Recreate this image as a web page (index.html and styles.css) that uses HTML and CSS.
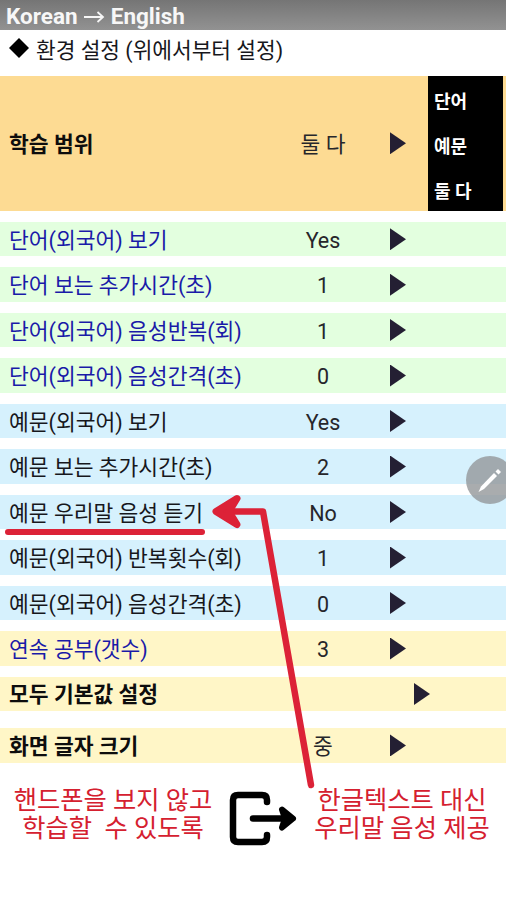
FILE: index.html
```
<!DOCTYPE html>
<html lang="ko">
<head>
  <meta charset="UTF-8">
  <meta name="viewport" content="width=device-width, initial-scale=1.0">
  <title>Korean → English</title>
  <link rel="stylesheet" href="styles.css">
</head>
<body>
  <div class="screen">
    <header class="title-bar">Korean <svg class="title-arrow" viewBox="0 0 22 14"><path d="M1 7H20M14.5 2L20 7L14.5 12"/></svg> English</header>
    <h1 class="page-title"><svg class="diamond" viewBox="0 0 20 20"><path d="M10 0L20 10L10 20L0 10Z"/></svg>환경 설정 (위에서부터 설정)</h1>

    <!-- Study range, with its options open -->
    <div class="row range">
      <span class="label bold">학습 범위</span>
      <span class="value">둘 다</span>
      <span class="arrow"></span>
      <ul class="options">
        <li>단어</li>
        <li>예문</li>
        <li>둘 다</li>
      </ul>
    </div>

    <!-- Settings -->
    <div class="settings">
      <div class="row green"><span class="label blue-text">단어(외국어) 보기</span><span class="value">Yes</span><span class="arrow"></span></div>
      <div class="row green"><span class="label blue-text">단어 보는 추가시간(초)</span><span class="value">1</span><span class="arrow"></span></div>
      <div class="row green"><span class="label blue-text">단어(외국어) 음성반복(회)</span><span class="value">1</span><span class="arrow"></span></div>
      <div class="row green"><span class="label blue-text">단어(외국어) 음성간격(초)</span><span class="value">0</span><span class="arrow"></span></div>
      <div class="row sky"><span class="label">예문(외국어) 보기</span><span class="value">Yes</span><span class="arrow"></span></div>
      <div class="row sky"><span class="label">예문 보는 추가시간(초)</span><span class="value">2</span><span class="arrow"></span></div>
      <div class="row sky"><span class="label">예문 우리말 음성 듣기</span><span class="value">No</span><span class="arrow"></span></div>
      <div class="row sky"><span class="label">예문(외국어) 반복횟수(회)</span><span class="value">1</span><span class="arrow"></span></div>
      <div class="row sky"><span class="label">예문(외국어) 음성간격(초)</span><span class="value">0</span><span class="arrow"></span></div>
      <div class="row yellow"><span class="label blue-text">연속 공부(갯수)</span><span class="value">3</span><span class="arrow"></span></div>
      <div class="row yellow reset"><span class="label bold">모두 기본값 설정</span><span class="value"></span><span class="arrow"></span></div>
      <div class="row yellow font-size"><span class="label bold">화면 글자 크기</span><span class="value">중</span><span class="arrow"></span></div>
    </div>

    <!-- Captions -->
    <div class="captions">
      <p class="caption left">핸드폰을 보지 않고<br>학습할&nbsp; 수 있도록</p>
      <svg class="exit-icon" viewBox="0 0 68 56">
        <path d="M38 11V9Q38 4 33 4H9Q4 4 4 9V46Q4 51 9 51H33Q38 51 38 46V44"/>
        <path d="M24 27.5H58"/>
        <path d="M53 18.5L64 27.5L53 36.5L56 27.5Z"/>
      </svg>
      <p class="caption right">한글텍스트 대신<br>우리말 음성 제공</p>
    </div>

    <!-- Red underline and pointer -->
    <svg class="pointer" viewBox="0 0 506 900">
      <path class="underline" d="M8 532H202"/>
      <path class="line" d="M222 511.5H263L311 785"/>
      <path class="head" d="M237 498.5L216 511.5L237 524.5L229 511.5Z"/>
    </svg>

    <button class="edit-button" aria-label="Edit">
      <svg viewBox="0 0 48 48">
        <path d="M12.5 36L15 30.5L28 17L31 20L18 33Z"/>
        <path d="M29.5 15.5L32 13L35 16L32.5 18.5Z"/>
      </svg>
    </button>
  </div>
</body>
</html>
```
FILE: styles.css
```
body {
  margin: 0;
  background-color: #ffffff;
  font-family: Roboto, "Noto Sans CJK KR", sans-serif;
  color: #17171c;
}
.screen {
  position: relative;
  width: 506px;
  height: 900px;
  overflow: hidden;
}
.title-bar {
  box-sizing: border-box;
  height: 30px;
  padding: 2px 6px 0;
  background: linear-gradient(#757575, #929292);
  color: #f7f7f7;
  font-size: 22.5px;
  font-weight: 700;
  line-height: 28px;
  white-space: nowrap;
}
.title-arrow {
  width: 22px;
  height: 14px;
  fill: none;
  stroke: #f7f7f7;
  stroke-width: 1.8;
}
.page-title {
  display: flex;
  align-items: center;
  height: 36px;
  margin: 0 0 10px;
  padding-left: 9px;
  font-size: 21.4px;
  font-weight: 400;
  white-space: nowrap;
}
.diamond {
  width: 20px;
  height: 20px;
  margin-right: 7px;
}
.row {
  display: grid;
  grid-template-columns: 270px 88px 1fr;
  align-items: center;
  height: 34.3px;
  padding-left: 9px;
  font-size: 21.5px;
  line-height: 30px;
  white-space: nowrap;
}
.range {
  grid-template-columns: 270px 88px 61px 75px 1fr;
  height: 134.5px;
  margin-bottom: 11.5px;
  background-color: #fddb93;
}
.settings {
  display: flex;
  flex-direction: column;
  gap: 11.2px;
}
.green {
  background-color: #e3ffdf;
}
.sky {
  background-color: #d6f1fd;
}
.yellow {
  background-color: #fff6c7;
}
.font-size {
  margin-top: 6px;
}
.label,
.value {
  padding-top: 3px;
}
.blue-text {
  color: #1a1aa8;
}
.bold {
  color: #0d0d0d;
  font-weight: 700;
}
.value {
  color: #26262b;
  text-align: center;
}
.arrow {
  margin-left: 23px;
  width: 16px;
  height: 22px;
  background-color: #241f33;
  clip-path: polygon(0 0, 100% 50%, 0 100%);
}
.reset .arrow {
  margin-left: 47px;
}
.options {
  display: flex;
  flex-direction: column;
  justify-content: space-between;
  box-sizing: border-box;
  height: 100%;
  margin: 0;
  padding: 11px 0 4px 6px;
  background-color: #000000;
  color: #ffffff;
  font-size: 18px;
  font-weight: 700;
  list-style: none;
}
.captions {
  display: flex;
  margin-top: 22px;
  color: #d5202f;
  font-size: 25.3px;
  line-height: 28.5px;
}
.caption {
  margin: 0;
  padding-top: 2px;
  text-align: center;
  white-space: nowrap;
}
.left {
  width: 226px;
}
.right {
  width: 208px;
}
.exit-icon {
  flex-shrink: 0;
  width: 68px;
  height: 56px;
  margin: 6px 1px 0 3px;
  fill: none;
  stroke: #000000;
  stroke-width: 6.5;
  stroke-linecap: round;
  stroke-linejoin: round;
}
.exit-icon path:last-child {
  fill: #000000;
  stroke-width: 6;
}
.pointer {
  position: absolute;
  top: 0;
  left: 0;
  width: 506px;
  height: 900px;
  fill: none;
  stroke: #dc2237;
  stroke-linecap: round;
  stroke-linejoin: round;
  pointer-events: none;
}
.underline {
  stroke-width: 6;
}
.line {
  stroke-width: 6.5;
}
.head {
  fill: #dc2237;
  stroke-width: 7;
}
.edit-button {
  position: absolute;
  top: 456px;
  left: 466px;
  width: 48px;
  height: 48px;
  padding: 0;
  border: none;
  border-radius: 50%;
  background-color: rgba(148, 151, 154, 0.8);
}
.edit-button svg {
  display: block;
  fill: #ffffff;
}
```
